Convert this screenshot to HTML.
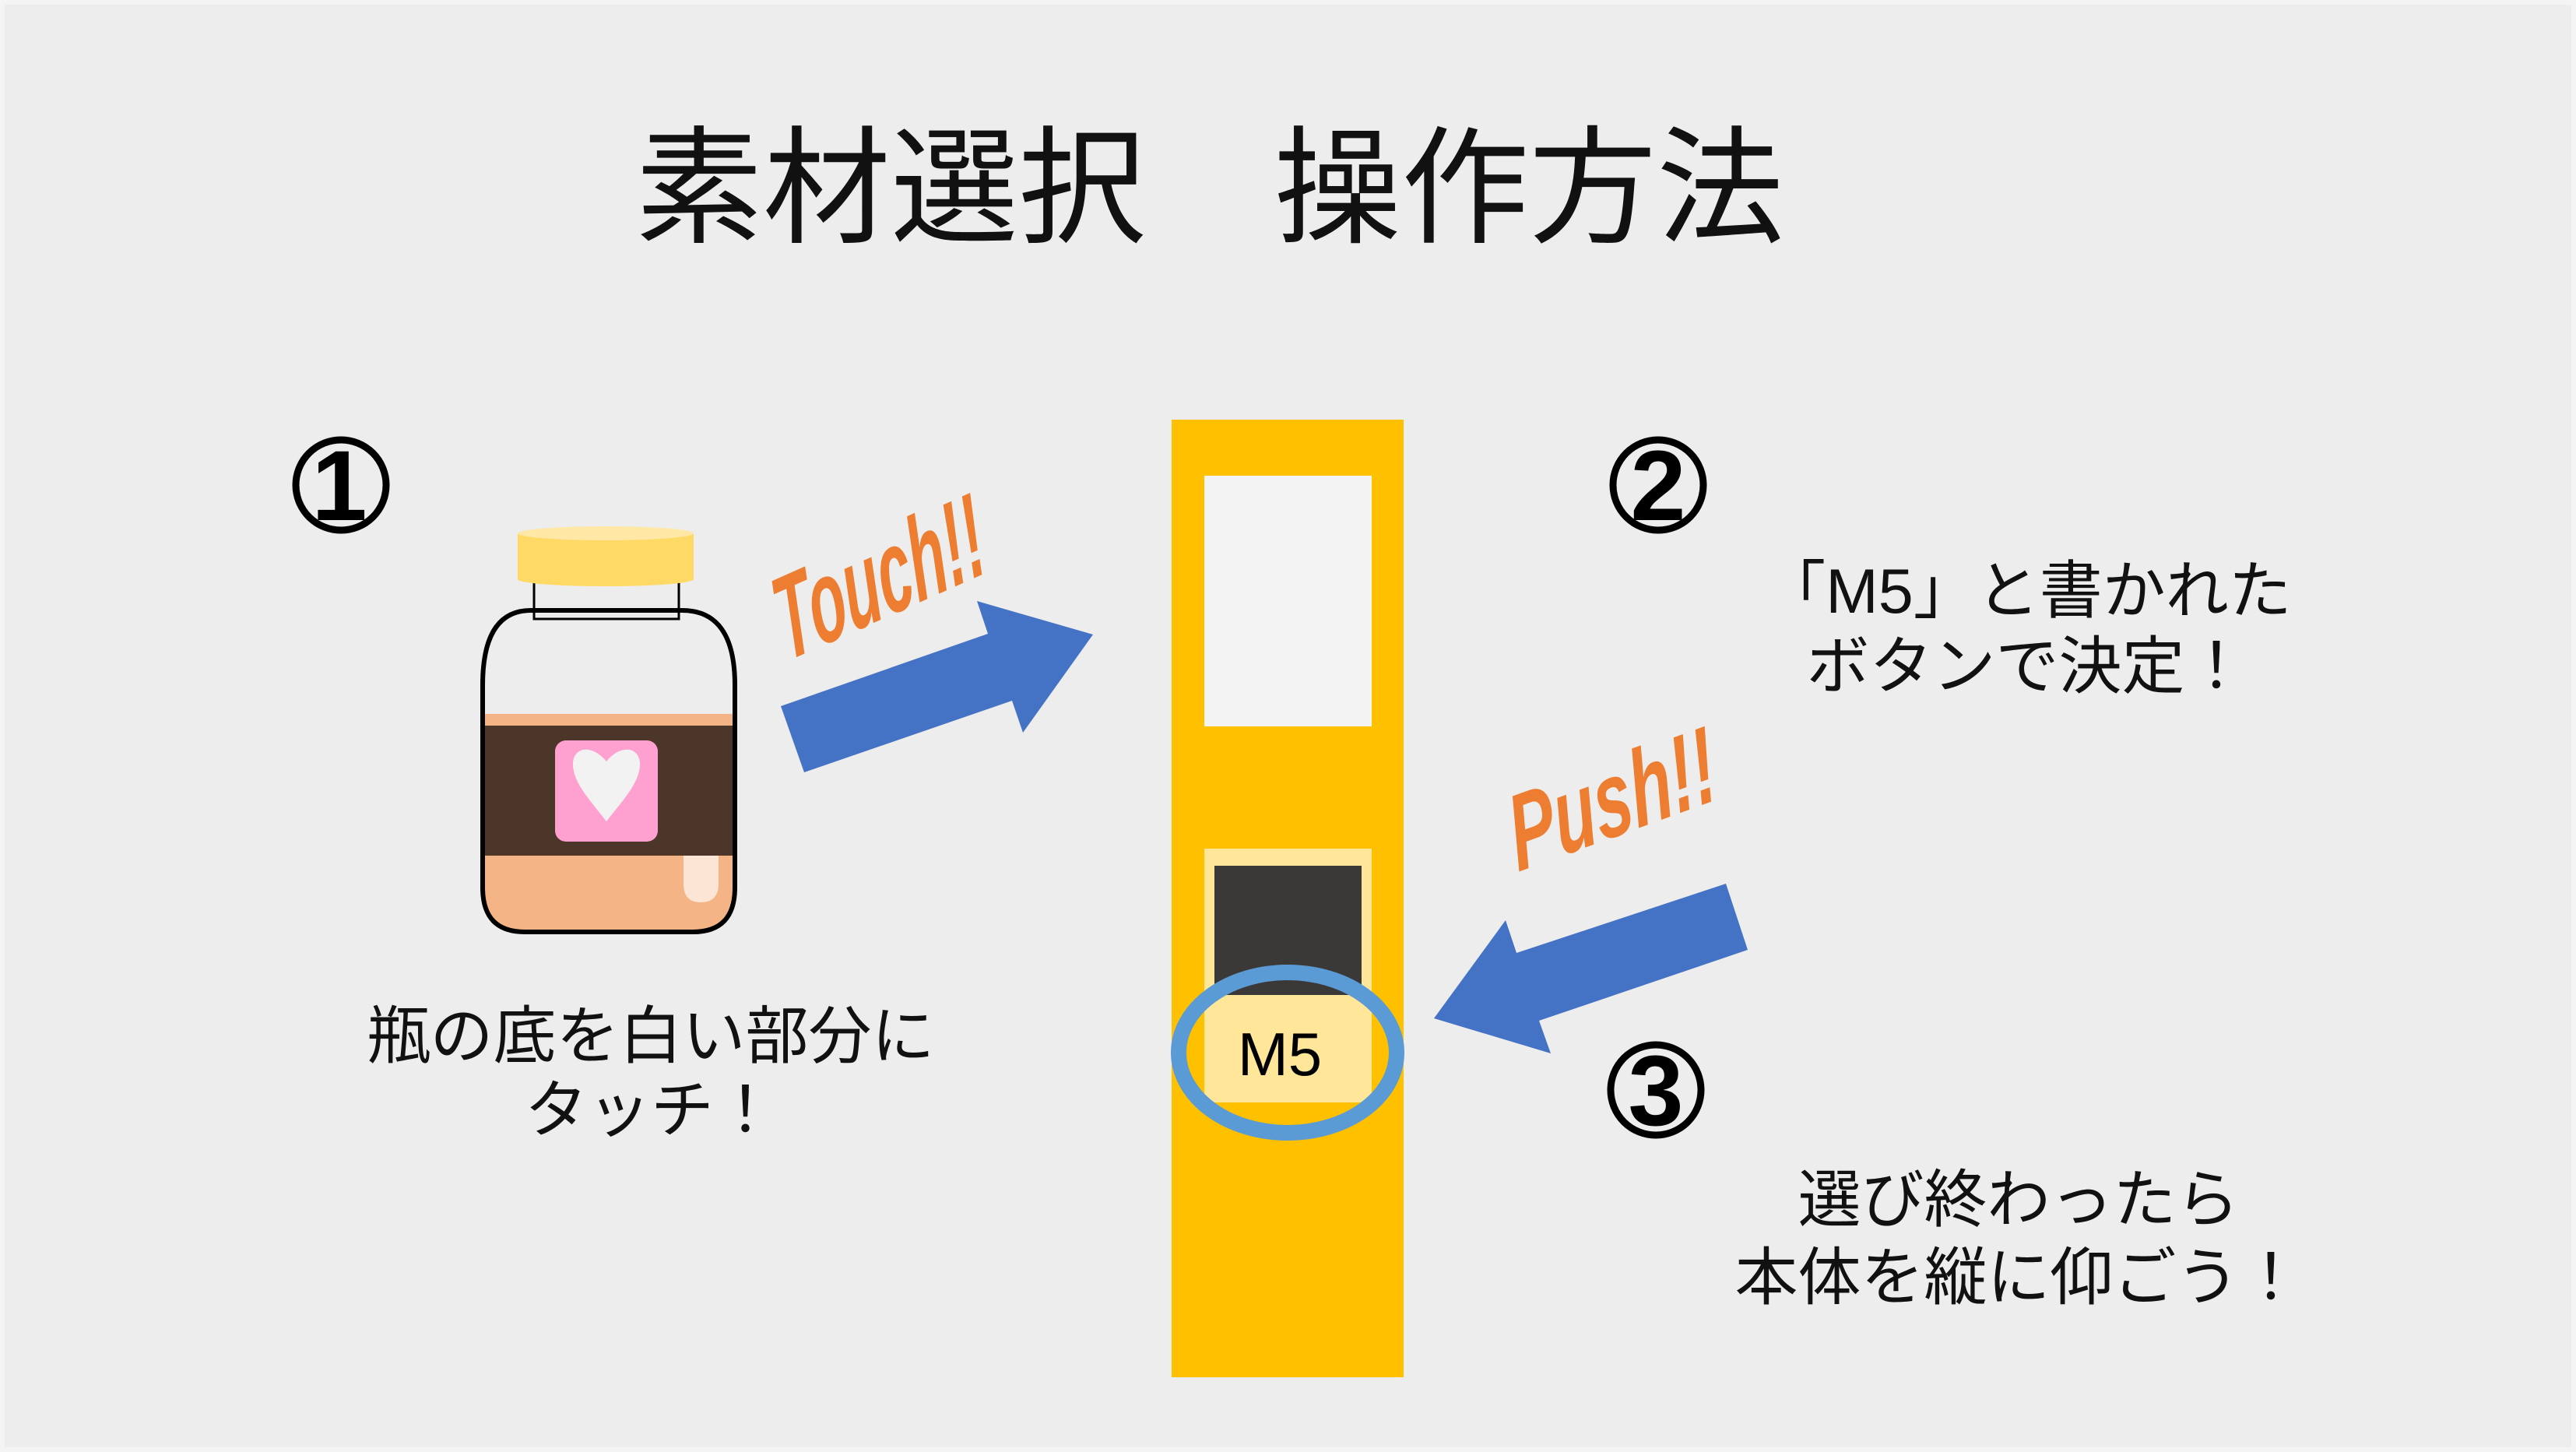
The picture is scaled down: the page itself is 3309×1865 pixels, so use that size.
<!DOCTYPE html>
<html><head><meta charset="utf-8"><style>
html,body{margin:0;padding:0}
body{width:3309px;height:1865px;background:#ededed;position:relative;overflow:hidden;font-family:"Liberation Sans","Noto Sans CJK JP",sans-serif;}
.t{position:absolute;white-space:nowrap;color:#111;text-align:center}
</style></head><body>
<svg width="3309" height="1865" style="position:absolute;left:0;top:0">
<rect x="3" y="3" width="3303" height="1859" fill="none" stroke="#f4f4f4" stroke-width="6"/>
<!-- jar -->
<rect x="686" y="735" width="186" height="60" fill="none" stroke="#000" stroke-width="3"/>
<clipPath id="jc"><path d="M682 784 H876 Q944 784 944 880 V1140 Q944 1197 890 1197 H674 Q620 1197 620 1140 V880 Q620 784 682 784 Z"/></clipPath>
<g clip-path="url(#jc)">
<rect x="600" y="917" width="360" height="300" fill="#f4b486"/>
<rect x="600" y="932" width="360" height="167" fill="#4b3629"/>
<path d="M878 1099 H923 V1135 Q923 1159 900 1159 Q878 1159 878 1135 Z" fill="#fde5d6"/>
</g>
<path d="M682 784 H876 Q944 784 944 880 V1140 Q944 1197 890 1197 H674 Q620 1197 620 1140 V880 Q620 784 682 784 Z" fill="none" stroke="#000" stroke-width="6"/>
<rect x="665" y="686" width="226" height="58" fill="#ffd966"/>
<ellipse cx="778" cy="744" rx="113" ry="9" fill="#ffd966"/>
<ellipse cx="778" cy="685" rx="113" ry="9" fill="#ffe8a6"/>
<rect x="713" y="951" width="132" height="130" rx="14" fill="#ffa1d0"/>
<path d="M779 1055 C760 1030 735 1005 736 980 C737 960 760 955 779 978 C798 955 821 960 822 980 C823 1005 798 1030 779 1055 Z" fill="#f2f2f2"/>
<!-- touch arrow -->
<polygon points="1003,907 1269,814 1255,772 1404,815 1314,941 1300,900 1033,992" fill="#4472c4"/>
<!-- device -->
<rect x="1505" y="539" width="298" height="1230" fill="#ffc000"/>
<rect x="1547" y="611" width="215" height="322" fill="#f3f3f3"/>
<rect x="1547" y="1090" width="215" height="326" fill="#ffe699"/>
<rect x="1560" y="1112" width="189" height="166" fill="#3a3937"/>
<ellipse cx="1654" cy="1352" rx="140" ry="103" fill="none" stroke="#5b9bd5" stroke-width="20"/>
<text x="1644" y="1381" font-family="Liberation Sans" font-size="78" text-anchor="middle" fill="#000">M5</text>
<!-- push arrow -->
<polygon points="1842,1308 1934,1182 1948,1224 2217,1135 2245,1220 1977,1311 1992,1353" fill="#4472c4"/>
<!-- circled numbers -->
<g fill="none" stroke="#000" stroke-width="9">
<circle cx="438" cy="623" r="58"/>
<circle cx="2130" cy="623" r="58"/>
<circle cx="2127" cy="1400" r="58"/>
</g>
<g font-family="Liberation Sans" font-weight="bold" font-size="128" text-anchor="middle" fill="#000">
<text x="436" y="668">1</text>
<text x="2130" y="668">2</text>
<text x="2127" y="1445">3</text>
</g>
<!-- script words -->
<text x="0" y="0" font-family="Liberation Sans" font-style="italic" font-weight="bold" font-size="110" fill="#ed7d31" transform="translate(1010,850) rotate(-24) skewX(-10) scale(0.72,1.35)">Touch!!</text>
<text x="0" y="0" font-family="Liberation Sans" font-style="italic" font-weight="bold" font-size="105" fill="#ed7d31" transform="translate(1950,1120) rotate(-20) skewX(-8) scale(0.85,1.3)">Push!!</text>
</svg>
<div class="t" style="left:554px;top:148px;width:2000px;font-size:164px;line-height:190px">素材選択　操作方法</div>
<div class="t" style="left:336px;top:1285px;width:1000px;font-size:81px;line-height:95px">瓶の底を白い部分に<br>タッチ！</div>
<div class="t" style="left:2104px;top:712px;width:1000px;font-size:81px;line-height:97px">「M5」と書かれた<br>ボタンで決定！</div>
<div class="t" style="left:2093px;top:1492px;width:1000px;font-size:81px;line-height:100px">選び終わったら<br>本体を縦に仰ごう！</div>
</body></html>
